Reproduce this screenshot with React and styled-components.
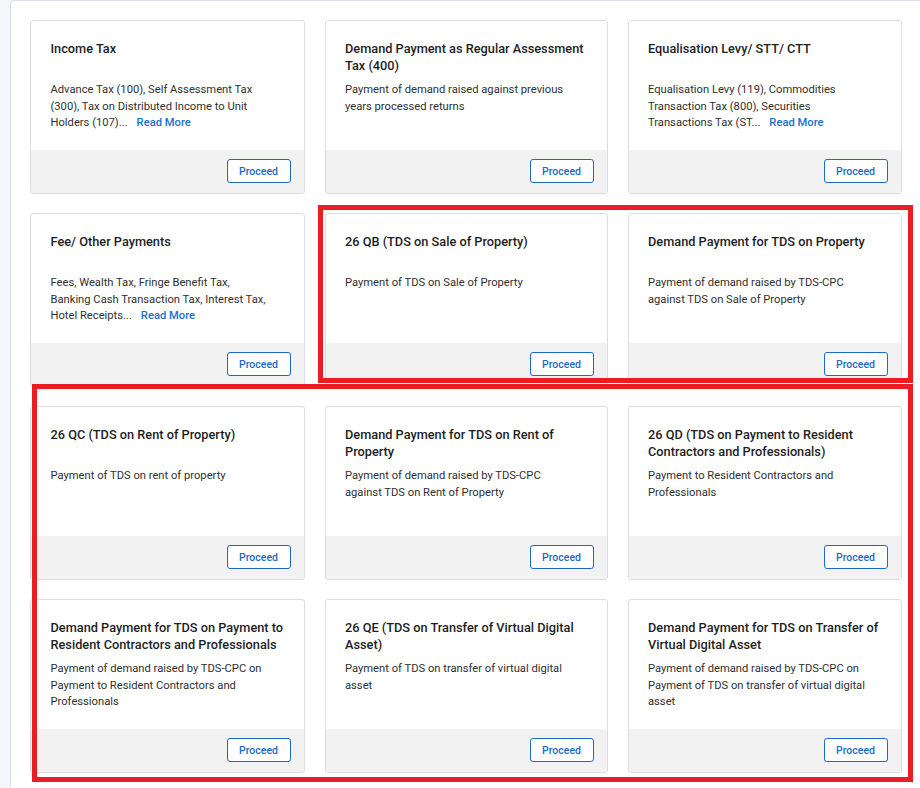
import React from "react";
import styled, { createGlobalStyle } from "styled-components";

const Global = createGlobalStyle`
  html, body { margin: 0; padding: 0; }
  body {
    background: #f5f6fa;
    font-family: Roboto, "Liberation Sans", Arial, sans-serif;
    overflow: hidden;
  }
`;

const Page = styled.div`
  position: relative;
  width: 920px;
  height: 788px;
  overflow: hidden;
`;

const Panel = styled.div`
  margin-left: 10px;
  background: #fff;
  border: 1px solid #dcdcea;
  border-right: none;
  border-top-left-radius: 4px;
  height: 820px;
  box-sizing: border-box;
  padding: 19px 0 0 19px;
`;

const Grid = styled.div`
  display: grid;
  grid-template-columns: 274.5px 283px 274px;
  grid-auto-rows: 173.5px;
  column-gap: 20px;
  row-gap: 19.5px;
`;

const Card = styled.div`
  display: flex;
  flex-direction: column;
  border: 1px solid #dcdce6;
  border-radius: 3px;
  background: #fff;
  overflow: hidden;
`;

const Body = styled.div`
  flex: 1;
  padding: 19px 19px 0 19.5px;
`;

const Title = styled.div`
  font-size: 12.75px;
  font-weight: 500;
  line-height: 17px;
  color: #1e1e1e;
  min-height: 34px;
`;

const Desc = styled.div`
  margin-top: 8px;
  margin-right: 13.5px;
  font-size: 11.2px;
  line-height: 16.5px;
  color: #303030;
`;

const ReadMore = styled.a`
  color: #1a6fd1;
  font-weight: 500;
  margin-left: 9px;
  cursor: pointer;
`;

const Footer = styled.div`
  height: 43px;
  background: #f2f2f2;
  display: flex;
  align-items: center;
  justify-content: flex-end;
  padding-right: 13px;
`;

const Button = styled.button`
  width: 64px;
  height: 24px;
  border: 1px solid #1b6ac9;
  border-radius: 3px;
  background: #fff;
  color: #1b6ac9;
  font-family: Roboto, "Liberation Sans", Arial, sans-serif;
  font-size: 10.5px;
  font-weight: 500;
  padding: 0;
  cursor: pointer;
`;

const Highlight = styled.div`
  position: absolute;
  box-sizing: border-box;
  border: 5px solid #ea1c24;
  pointer-events: none;
`;

const cards = [
  {
    title: "Income Tax",
    desc: "Advance Tax (100), Self Assessment Tax (300), Tax on Distributed Income to Unit Holders (107)...",
    more: true,
  },
  {
    title: "Demand Payment as Regular Assessment Tax (400)",
    desc: "Payment of demand raised against previous years processed returns",
  },
  {
    title: "Equalisation Levy/ STT/ CTT",
    desc: "Equalisation Levy (119), Commodities Transaction Tax (800), Securities Transactions Tax (ST...",
    more: true,
  },
  {
    title: "Fee/ Other Payments",
    desc: "Fees, Wealth Tax, Fringe Benefit Tax, Banking Cash Transaction Tax, Interest Tax, Hotel Receipts...",
    more: true,
  },
  {
    title: "26 QB (TDS on Sale of Property)",
    desc: "Payment of TDS on Sale of Property",
  },
  {
    title: "Demand Payment for TDS on Property",
    desc: "Payment of demand raised by TDS-CPC against TDS on Sale of Property",
  },
  {
    title: "26 QC (TDS on Rent of Property)",
    desc: "Payment of TDS on rent of property",
  },
  {
    title: "Demand Payment for TDS on Rent of Property",
    desc: "Payment of demand raised by TDS-CPC against TDS on Rent of Property",
  },
  {
    title: "26 QD (TDS on Payment to Resident Contractors and Professionals)",
    desc: "Payment to Resident Contractors and Professionals",
  },
  {
    title: "Demand Payment for TDS on Payment to Resident Contractors and Professionals",
    desc: "Payment of demand raised by TDS-CPC on Payment to Resident Contractors and Professionals",
  },
  {
    title: "26 QE (TDS on Transfer of Virtual Digital Asset)",
    desc: "Payment of TDS on transfer of virtual digital asset",
  },
  {
    title: "Demand Payment for TDS on Transfer of Virtual Digital Asset",
    desc: "Payment of demand raised by TDS-CPC on Payment of TDS on transfer of virtual digital asset",
  },
];

export default function App() {
  return (
    <Page>
      <Global />
      <Panel>
        <Grid>
          {cards.map((c, i) => (
            <Card key={i}>
              <Body>
                <Title>{c.title}</Title>
                <Desc>
                  {c.desc}
                  {c.more && <ReadMore>Read More</ReadMore>}
                </Desc>
              </Body>
              <Footer>
                <Button>Proceed</Button>
              </Footer>
            </Card>
          ))}
        </Grid>
      </Panel>
      <Highlight style={{ left: 318, top: 205, width: 595, height: 178 }} />
      <Highlight style={{ left: 32, top: 384, width: 881, height: 398 }} />
    </Page>
  );
}
